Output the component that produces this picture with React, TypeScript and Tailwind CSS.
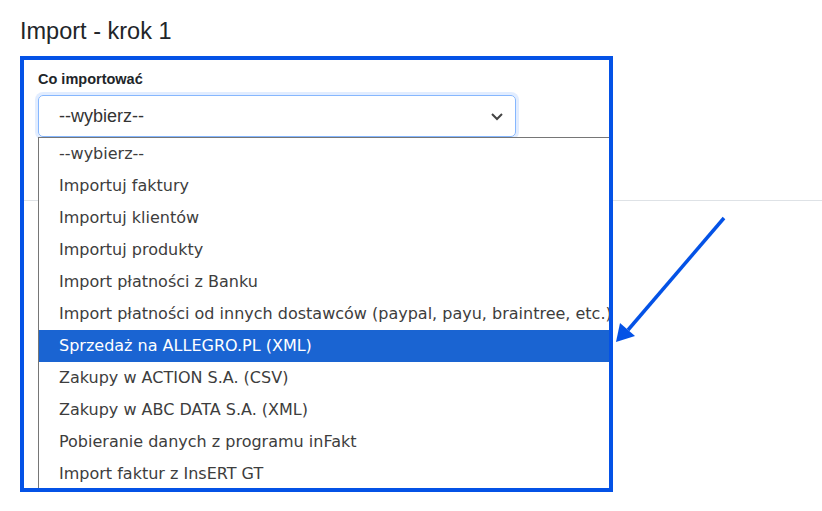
import React from "react";

const options = [
  "--wybierz--",
  "Importuj faktury",
  "Importuj klientów",
  "Importuj produkty",
  "Import płatności z Banku",
  "Import płatności od innych dostawców (paypal, payu, braintree, etc.)",
  "Sprzedaż na ALLEGRO.PL (XML)",
  "Zakupy w ACTION S.A. (CSV)",
  "Zakupy w ABC DATA S.A. (XML)",
  "Pobieranie danych z programu inFakt",
  "Import faktur z InsERT GT",
];

export default function App() {
  return (
    <div className="relative w-[822px] h-[511px] overflow-hidden bg-white font-['Liberation_Sans',Arial,sans-serif]">
      <div className="pl-5 pt-[17px]">
        <h3 className="text-[23.5px] leading-[28px] text-[#212529]">Import - krok 1</h3>
        <div className="pl-[18px] pt-[24px]">
          <label className="block text-[14.5px] leading-[20px] font-bold text-[#212529]">Co importować</label>
          <div className="mt-[6px] flex h-[42px] w-[478px] items-center justify-between rounded-[5px] border border-[#86b7fe] pl-[20px] pr-[10px] shadow-[0_0_0_3px_rgba(13,110,253,0.12)]">
            <span className="text-[18px] text-[#333]">--wybierz--</span>
            <svg width="14" height="10" viewBox="0 0 14 10" className="mr-[1px]">
              <path d="M2 3 L7 8 L12 3" fill="none" stroke="#444" strokeWidth="2" />
            </svg>
          </div>
        </div>
        <div className="mt-[63px] h-px bg-[#dee2e6]" />
      </div>

      <div className="absolute left-[38px] top-[137px] w-[573px] h-[352px] overflow-hidden border-l border-t border-[#767676] bg-white font-['DejaVu_Sans',Verdana,sans-serif]">
        {options.map((o, i) => (
          <div
            key={o}
            className={
              "h-[32px] pl-[20px] flex items-center whitespace-nowrap text-[16px] " +
              (i === 6 ? "bg-[#1a64d2] text-white" : "text-[#3d3d3d]")
            }
          >
            {o}
          </div>
        ))}
      </div>

      <div className="absolute left-[20px] top-[56px] w-[593px] h-[436px] border-4 border-[#0452e6]" />

      <svg className="absolute left-0 top-0" width="822" height="511" viewBox="0 0 822 511">
        <line x1="724" y1="218" x2="628" y2="330" stroke="#0452e6" strokeWidth="3.5" />
        <polygon points="616,342 620,323 635,336" fill="#0452e6" />
      </svg>
    </div>
  );
}
